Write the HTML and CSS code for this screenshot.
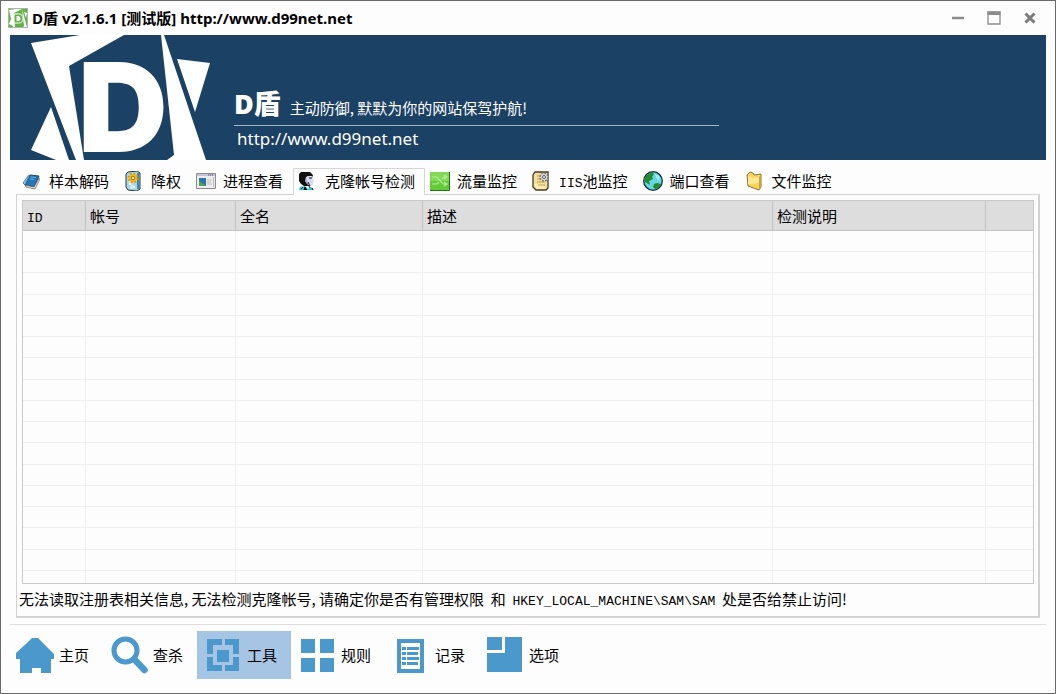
FILE: index.html
```html
<!DOCTYPE html>
<html lang="zh-CN">
<head>
<meta charset="utf-8">
<title>D盾 v2.1.6.1</title>
<link rel="stylesheet" href="styles.css">
</head>
<body>
<div class="window">
  <header class="titlebar">
    <svg class="app-icon" viewBox="0 0 20 20" aria-hidden="true">
      <rect width="20" height="20" fill="#a9b8a5"/>
      <rect x="1" y="1" width="18" height="18" fill="#62b346"/>
      <path d="M1 2L8 1H14L6 5L7 19H5ZM3 11L5 18L1 16ZM14 1L19 19H15L16 18ZM16 4L19 5L18 10Z" fill="#fff"/>
      <path d="M6 6h4.500q4.500 0 4.500 4.500T10.500 15H6z" fill="#62b346" stroke="#fff"/>
      <path d="M8.500 8v5h2q2-.5 2-2.500t-2-2.500z" fill="#fff"/>
    </svg>
    <h1 class="title">D盾 v2.1.6.1 [测试版] http://www.d99net.net</h1>
    <div class="controls">
      <button class="control" aria-label="最小化"><svg viewBox="0 0 14 14"><path d="M1 7h12" stroke="#8c8c8c" stroke-width="2.500"/></svg></button>
      <button class="control" aria-label="最大化"><svg viewBox="0 0 14 14"><path d="M1 1h12v12H1z" fill="none" stroke="#8c8c8c" stroke-width="1.300"/><path d="M.5.5h13V4H.5z" fill="#8c8c8c"/></svg></button>
      <button class="control" aria-label="关闭"><svg viewBox="0 0 14 14"><path d="M2.500 2.500l9 9M11.500 2.500l-9 9" stroke="#7c7c7c" stroke-width="3"/></svg></button>
    </div>
  </header>

  <section class="banner">
    <svg class="logo" viewBox="10 35 200 125" aria-hidden="true">
      <path d="M31 43L80 35H124L69 66L84 160H76ZM51 107L69 160H56L31 150ZM161 35H164L206 160H167L174 155ZM177 59L210 63L195 112Z" fill="#fff"/>
      <text class="logo-letter" x="78" y="152">D</text>
    </svg>
    <div class="banner-text">
      <p class="slogan"><strong class="brand">D盾</strong><span>主动防御, 默默为你的网站保驾护航!</span></p>
      <p class="site">http://www.d99net.net</p>
    </div>
  </section>

  <nav class="tabs" aria-label="工具">
    <button class="tab"><svg viewBox="0 0 20 20"><path d="M8 4L17 5L12 16L3 14Z" fill="#2478b8" stroke="#174c7b"/><path d="M8 4L3 14L1 12L6 5Z" fill="#8fc2e6" stroke="#315c80" stroke-width=".7"/><path d="M3 14L12 16L17 7L17.500 9L13 18L4 16Z" fill="#eee" stroke="#555" stroke-width=".7"/><path d="M9 6l5 .5M8 8l4 .5" stroke="#67aee0"/></svg>样本解码</button>
    <button class="tab"><svg viewBox="0 0 20 20"><path d="M4 1L13 0L16 2V18L13 20L4 19L2 16V3Z" fill="#a6d9ee" stroke="#333"/><path d="M14 2v16" stroke="#3389b2" stroke-width="2"/><path d="M4 10l5 2-4 1 6 3-5 1" stroke="#fff" fill="none"/><circle cx="9" cy="7" r="4" fill="#f5bf22"/><circle cx="9" cy="7" r="4.500" fill="none" stroke="#e09a0c" stroke-width="2" stroke-dasharray="2 1.500"/><circle cx="9" cy="7" r="1.800" fill="#fff1a4" stroke="#a86507"/></svg>降权</button>
    <button class="tab"><svg viewBox="0 0 20 20"><path d="M.5 2.500h19v15H.5z" fill="#ececec" stroke="#8c8c8c"/><path d="M1 3h18v2H1z" fill="#c6c4d2"/><path d="M12 4h1m1 0h1m1 0h1" stroke="#41418a"/><rect x="3" y="7" width="7" height="8" fill="#2c77a9"/><path d="M3 15v-5l7 5z" fill="#54a44d"/><path d="M11 9h5M11 11h4M11 13h5" stroke="#c0c0c0"/><path d="M17.500 6v10" stroke="#bbb"/></svg>进程查看</button>
    <button class="tab tab-active" aria-current="page"><svg viewBox="0 0 20 20"><path d="M3 1h9l3 3-1 3-3 1v7H6L3 13 1 10V3z" fill="#111"/><path d="M8 6l2-1h4l1 4 1 1-1 1v3l-3 1-3-2-2-3z" fill="#d5daf0"/><path d="M11 7h3M10 11l2 4" stroke="#111"/><path d="M8 8v3l2 2" stroke="#8b91b8" fill="none"/><path d="M1 19l1-3 5-1 3 3 3-2 3 3z" fill="#28c6d2"/><path d="M3 18l2-2m1 3 1-3 2 3m2-4 1 2m2 0 1 2" stroke="#111"/></svg>克隆帐号检测</button>
    <button class="tab"><svg viewBox="0 0 20 20"><path d="M0 1h19v18H0z" fill="#64ca3a"/><path d="M0 1h19v9H0z" fill="#83d957"/><path d="M0 19.500h19.500V1" fill="none" stroke="#267015"/><path d="M2 6h5l6 7h4M2 13h5l2-2M12 8l2-2h3M14 4l3 2-3 2M14 11l3 2-3 2" fill="none" stroke="#b5eb9a" stroke-width="1.200"/></svg>流量监控</button>
    <button class="tab"><svg viewBox="0 0 20 20"><path d="M3 1H16V17L14 19H4L1 16V4Z" fill="#f5df9e" stroke="#47391c" stroke-width="1.300"/><path d="M2 13h9l3 5H5z" fill="#ffedb4"/><path d="M5 5h3M5 8h5M5 11h8M6 14h7" stroke="#c39a48"/><circle cx="12" cy="6" r="4" fill="#ddd"/><circle cx="12" cy="6" r="4" fill="none" stroke="#777" stroke-width="1.500" stroke-dasharray="2 1.100"/><circle cx="12" cy="6" r="1.500" fill="#fff" stroke="#555"/></svg><span><span class="latin">IIS</span>池监控</span></button>
    <button class="tab"><svg viewBox="0 0 20 20"><circle cx="10" cy="10" r="9.300" fill="#65d6e3" stroke="#142e3c" stroke-width="1.300"/><path d="M4 4L9 1L11 3L9 6L10 8L6 10L7 14L2 11L1 8Z" fill="#238b2c"/><path d="M11 13l3-1 4 1-3 4-3 1-2-2z" fill="#238b2c"/><path d="M12 3l4 2 1 5-3-2z" fill="#a9edf0"/></svg>端口查看</button>
    <button class="tab"><svg viewBox="0 0 20 20"><path d="M2 4L5 1L8 2L9 4L16 3V16L14 19L3 15Z" fill="#f7d35a" stroke="#8b7440"/><path d="M14 6V18L16 16V4Z" fill="#d6a22e"/><path d="M3 5L8 7L14 6V12L3 13z" fill="#ffe994"/></svg>文件监控</button>
  </nav>

  <main class="panel">
    <div class="grid-frame">
      <table class="accounts">
        <colgroup><col class="col-id"><col class="col-account"><col class="col-name"><col class="col-desc"><col class="col-note"><col></colgroup>
        <thead><tr><th><span class="latin">ID</span></th><th>帐号</th><th>全名</th><th>描述</th><th>检测说明</th><th></th></tr></thead>
        <tbody>
          <tr><td></td><td></td><td></td><td></td><td></td><td></td></tr>
          <tr><td></td><td></td><td></td><td></td><td></td><td></td></tr>
          <tr><td></td><td></td><td></td><td></td><td></td><td></td></tr>
          <tr><td></td><td></td><td></td><td></td><td></td><td></td></tr>
          <tr><td></td><td></td><td></td><td></td><td></td><td></td></tr>
          <tr><td></td><td></td><td></td><td></td><td></td><td></td></tr>
          <tr><td></td><td></td><td></td><td></td><td></td><td></td></tr>
          <tr><td></td><td></td><td></td><td></td><td></td><td></td></tr>
          <tr><td></td><td></td><td></td><td></td><td></td><td></td></tr>
          <tr><td></td><td></td><td></td><td></td><td></td><td></td></tr>
          <tr><td></td><td></td><td></td><td></td><td></td><td></td></tr>
          <tr><td></td><td></td><td></td><td></td><td></td><td></td></tr>
          <tr><td></td><td></td><td></td><td></td><td></td><td></td></tr>
          <tr><td></td><td></td><td></td><td></td><td></td><td></td></tr>
          <tr><td></td><td></td><td></td><td></td><td></td><td></td></tr>
          <tr><td></td><td></td><td></td><td></td><td></td><td></td></tr>
          <tr class="row-cut"><td></td><td></td><td></td><td></td><td></td><td></td></tr>
        </tbody>
      </table>
    </div>
    <p class="status">无法读取注册表相关信息, 无法检测克隆帐号, 请确定你是否有管理权限&nbsp; 和&nbsp; <span class="latin">HKEY_LOCAL_MACHINE\SAM\SAM</span>&nbsp; 处是否给禁止访问!</p>
  </main>

  <nav class="toolbar" aria-label="主导航">
    <button class="tool"><svg viewBox="0 0 38 38"><path d="M16 2h6l4 4 12 12v5h-3v14H25v-5h-9v5H4V23H0v-6L12 6z"/></svg>主页</button>
    <button class="tool"><svg viewBox="0 0 38 38"><circle cx="15.500" cy="14.500" r="11.500" fill="none" stroke="#4a98cc" stroke-width="5"/><path d="M24 23L34.500 34" stroke="#4a98cc" stroke-width="6.500" stroke-linecap="round"/></svg>查杀</button>
    <button class="tool tool-active" aria-current="page"><svg viewBox="0 0 38 38"><path d="M3 3h15v6H9v9H3zM21 3h14v15h-6V9h-8zM3 21h6v8h9v6H3zM29 21h6v14H21v-6h8zM13 14h12v12H13z"/></svg>工具</button>
    <button class="tool"><svg viewBox="0 0 38 38"><path d="M3 3h14v14H3zM22 3h14v14H22zM3 22h14v14H3zM22 22h14v14H22z"/></svg>规则</button>
    <button class="tool"><svg viewBox="0 0 38 38"><path d="M5 3h27v34H5z"/><path d="M9 7h19v26H9z" fill="#fff"/><path d="M10 11h4v3h-4zM15 11h12v3H15zM10 16h4v3h-4zM15 16h11v3H15zM10 21h4v3h-4zM15 21h12v3H15zM10 26h4v3h-4zM15 26h11v3H15z"/></svg>记录</button>
    <button class="tool"><svg viewBox="0 0 38 38"><path d="M1 1h15v13H1zM19 1h17v35H1V17h18z"/></svg>选项</button>
  </nav>
</div>
</body>
</html>
```
FILE: styles.css
```css
* { box-sizing: border-box; }

body {
  margin: 0;
  color: #000;
  font: 15px/20px "Noto Sans CJK SC", sans-serif;
}

h1, p { margin: 0; }

button {
  padding: 0;
  border: 0;
  background: none;
  color: inherit;
  font: inherit;
  white-space: nowrap;
}

.window {
  display: flex;
  flex-direction: column;
  min-height: 100vh;
  padding: 0 9px 14px;
  border: 1px solid #6a6a6a;
  background: #fdfdfd;
}

.titlebar {
  display: flex;
  align-items: center;
  height: 34px;
}

.app-icon {
  width: 20px;
  height: 20px;
  margin-left: -2px;
}

.title {
  flex: 1;
  margin-left: 4px;
  font: bold 15px/20px "Noto Sans", "Noto Sans CJK SC", sans-serif;
}

.controls {
  display: flex;
  gap: 22px;
  padding-right: 9px;
}

.control, .control svg {
  display: block;
  width: 14px;
  height: 14px;
}

.banner {
  display: flex;
  height: 125px;
  background: #1b4165;
  color: #fff;
}

.logo {
  width: 200px;
  height: 125px;
}

.logo-letter {
  fill: #fff;
  font: 900 124px Inter, sans-serif;
}

.banner-text {
  width: 485px;
  margin-left: 24px;
  padding-top: 51px;
}

.slogan {
  display: flex;
  align-items: baseline;
  gap: 9px;
  height: 40px;
  border-bottom: 1px solid #a5b8c9;
  line-height: 36px;
}

.brand {
  font: 800 27px/36px "Open Sans", "Noto Sans CJK SC", sans-serif;
}

.site {
  padding-left: 3px;
  font: 17px/26px "Noto Sans", sans-serif;
}

.tabs {
  display: flex;
  align-items: stretch;
  margin: 8px 0 -1px 7px;
}

.tab {
  display: flex;
  align-items: center;
  gap: 7px;
  height: 27px;
  padding: 0 9px 2px 4px;
  border: 1px solid transparent;
  border-bottom: 0;
}

.tab svg {
  width: 20px;
  height: 20px;
}

.tab-active {
  border-color: #d6d6d6;
  background: #fdfdfd;
  z-index: 1;
}

.panel {
  display: flex;
  flex: 1;
  flex-direction: column;
  margin: 0 6px;
  padding: 5px 4px 0 5px;
  border: 1px solid #d2d2d2;
  border-right-width: 2px;
  border-bottom-width: 2px;
}

.grid-frame {
  display: flex;
  flex: 1;
  border: 1px solid #c9c9c9;
}

.accounts {
  width: 100%;
  border-spacing: 0;
  table-layout: fixed;
}

.col-id { width: 63px; }
.col-account { width: 150px; }
.col-name { width: 187px; }
.col-desc { width: 350px; }
.col-note { width: 213px; }

.accounts th {
  height: 30px;
  padding: 0 4px;
  border-right: 1px solid #c2c2c2;
  border-bottom: 1px solid #c2c2c2;
  background: #dddddd;
  font-weight: normal;
  text-align: left;
}

.accounts td {
  height: 21px;
  padding: 0;
  border-right: 1px solid #f0f0f0;
  border-bottom: 1px solid #f0f0f0;
}

.accounts tr:nth-child(4n+3) td { height: 22px; }

.accounts th:last-child, .accounts td:last-child { border-right: 0; }

.accounts .row-cut td {
  height: 12px;
  border-bottom: 0;
}

.latin {
  font-family: "Liberation Mono", monospace;
  font-size: 13px;
  line-height: 1;
}

.status {
  margin-left: -3px;
  padding: 5px 0 7px;
}

.toolbar {
  display: flex;
  margin-top: 6px;
  padding: 6px 0 0;
  border-top: 1px solid #dedede;
}

.tool {
  display: flex;
  align-items: center;
  gap: 5px;
  width: 94px;
  height: 48px;
  padding-left: 7px;
}

.tool:first-child { margin-left: -1px; }

.tool svg {
  width: 38px;
  height: 38px;
  fill: #4a98cc;
}

.tool-active { background: #a6c5e5; }
```
